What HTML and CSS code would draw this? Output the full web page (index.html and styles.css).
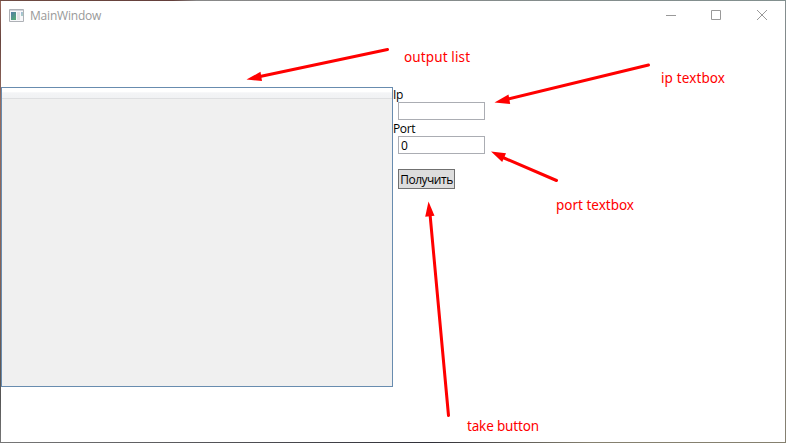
FILE: index.html
```
<!DOCTYPE html>
<html lang="ru">
<head>
<meta charset="utf-8">
<title>MainWindow</title>
<link rel="stylesheet" href="styles.css">
</head>
<body>
<div class="window">
  <div class="client">
    <header class="titlebar">
      <svg class="app-icon" width="16" height="14" viewBox="0 0 16 14">
        <defs><linearGradient id="pane" x1="0" y1="0" x2=".7" y2="1"><stop offset="0" stop-color="#527ba7"/><stop offset="1" stop-color="#55a978"/></linearGradient></defs>
        <path d="M.5.5h14v12H.5z" fill="#f8f8fa" stroke="#aeb1b6"/>
        <path d="M1 1h13v1H1z" fill="#d0d3da"/>
        <path d="M2 3h5v8H2z" fill="url(#pane)"/>
        <path d="M8 3h3v8H8z" fill="#e2e3e6"/>
        <path d="M12 3h2v4h-2z" fill="#a7c9c9"/>
        <path d="M12 3h1v2h-1z" fill="#a3b9d9"/>
      </svg>
      <span class="title">MainWindow</span>
      <svg class="controls" width="138" height="29" viewBox="0 0 138 29" fill="none" stroke="#999">
        <path d="M19 14.500h10"/>
        <path d="M64.500 9.500h9v9h-9z"/>
        <path d="M110 9l10 10M120 9l-10 10"/>
      </svg>
    </header>
    <main class="content">
      <div class="list"><div class="list-header"></div></div>
      <form class="form">
        <label class="label" for="ip">Ip</label>
        <input class="field" id="ip" type="text">
        <label class="label port" for="port">Port</label>
        <input class="field" id="port" type="text" value="0">
        <button class="button" type="button">Получить</button>
      </form>
    </main>
  </div>
  <svg class="notes" width="786" height="443" viewBox="0 0 786 443">
    <g class="arrows">
      <path d="M387.500 49.500L260 76.500M648.500 65L508 99M556.500 180.500L503 157.500M448.500 415.500L430 214"/>
    </g>
    <g class="heads">
      <path d="M246.500 79.500L260.500 71.800L262 81z"/>
      <path d="M494.500 102.500L508.500 94.500L510.200 104z"/>
      <path d="M491 151.500L506 153.200L502.200 162z"/>
      <path d="M428.500 201.500L434.500 215.800L425.200 216.800z"/>
    </g>
    <g class="captions">
      <text x="404" y="62" textLength="66">output list</text>
      <text x="661" y="83" textLength="64">ip textbox</text>
      <text x="556" y="210" textLength="78">port textbox</text>
      <text x="467" y="431" textLength="72">take button</text>
    </g>
  </svg>
</div>
</body>
</html>
```
FILE: styles.css
```
* { box-sizing: border-box; }
body {
  margin: 0;
  overflow: hidden;
  font: 12px/16px "Open Sans", "Noto Sans", sans-serif;
  color: #000;
}
.window {
  position: relative;
  width: 786px;
  height: 443px;
  padding: 1px;
  background:
    linear-gradient(90deg, #704c43, #633e3a 22%, #888 25%, #82908f) top / 100% 1px no-repeat,
    linear-gradient(90deg, #777, #303038 55%, #85806f 75%, #85806f) bottom / 100% 1px no-repeat,
    linear-gradient(#98685b, #67443e 9%, #966c60 23%, #866256 60%, #555 90%, #777) left / 1px 100% no-repeat,
    linear-gradient(#858f90, #777 40%, #858071) right / 1px 100% no-repeat;
}
.client { height: 441px; background: #fff; }
.titlebar {
  display: flex;
  align-items: center;
  height: 29px;
  padding-left: 8px;
}
.app-icon { margin-top: 1px; }
.title { margin: 1px 0 0 5px; color: #999; letter-spacing: -0.2px; }
.controls { margin-left: auto; }
.content { display: flex; padding-top: 57px; }
.list {
  width: 392px;
  height: 300px;
  border: 1px solid #688caf;
  background: #f0f0f0;
}
.list-header {
  height: 11px;
  border-bottom: 1px solid #dedfe1;
  background: linear-gradient(#fff 35%, #f3f4f6 50%, #f1f2f4);
}
.form { display: flex; flex-direction: column; align-items: flex-start; }
.label { height: 15px; letter-spacing: -0.35px; }
.port { height: 16px; line-height: 18px; }
.field {
  width: 87px;
  height: 18px;
  margin: 0 0 0 5px;
  padding: 0 2px;
  border: 1px solid #abadb3;
  background: none;
  color: #000;
  font: inherit;
}
.button {
  width: 57px;
  height: 20px;
  margin: 15px 0 0 5px;
  padding: 2px 0 0;
  border: 1px solid #707070;
  background: #ddd;
  color: #000;
  font: inherit;
  letter-spacing: -0.5px;
  white-space: nowrap;
}
.notes { position: absolute; inset: 0; pointer-events: none; }
.arrows { fill: none; stroke: #f00; stroke-width: 3; stroke-linecap: round; }
.heads { fill: #f00; }
.captions { fill: #f00; font-family: "Noto Sans", sans-serif; font-size: 13.5px; }
```
